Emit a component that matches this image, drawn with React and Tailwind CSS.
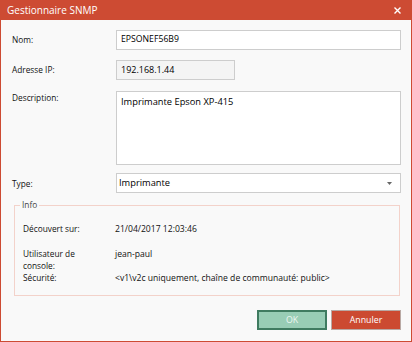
import React from "react";

const font = { fontFamily: '"Open Sans", "Noto Sans", sans-serif' };

const Field = ({ label, children, className = "" }) => (
  <div className={`flex ${className}`}>
    <div className="w-[104px] shrink-0 text-[8.3px] text-[#111]">{label}</div>
    {children}
  </div>
);

const InfoRow = ({ label, value, className = "" }) => (
  <div className={`flex text-[8.3px] text-[#111] leading-[12px] ${className}`}>
    <div className="w-[92px] shrink-0">{label}</div>
    <div className="text-[8.6px]">{value}</div>
  </div>
);

export default function App() {
  return (
    <div
      style={font}
      className="w-[412px] h-[342px] flex flex-col bg-[#cd4b33] overflow-hidden"
    >
      {/* title bar */}
      <div className="h-[20px] shrink-0 flex items-center justify-between pl-[7px] pr-[11px] text-white">
        <span className="text-[10px] leading-none">Gestionnaire SNMP</span>
        <svg width="7" height="7" viewBox="0 0 7 7">
          <path d="M0.5 0.5 L6.5 6.5 M6.5 0.5 L0.5 6.5" stroke="#fff" strokeWidth="1.4" />
        </svg>
      </div>

      {/* body */}
      <div className="flex-1 mx-[1px] mb-[1px] bg-[#f9f9f9] flex flex-col pl-[11px] pr-[10px]">
        <Field label="Nom:" className="mt-[10px] items-center">
          <div className="flex-1 h-[20px] border border-[#cdcdcd] bg-white flex items-center pl-[4px] text-[8.7px] text-black">
            EPSONEF56B9
          </div>
        </Field>

        <Field label="Adresse IP:" className="mt-[10px] items-center">
          <div className="w-[119px] h-[20px] border border-[#cdcdcd] bg-[#f4f4f4] flex items-center pl-[4px] text-[9px] text-black">
            192.168.1.44
          </div>
        </Field>

        <Field label={<span className="block mt-[1px]">Description:</span>} className="mt-[11px]">
          <div className="flex-1 h-[74px] border border-[#cdcdcd] bg-white pl-[4px] pt-[3px] text-[9.3px] text-black">
            Imprimante Epson XP-415
          </div>
        </Field>

        <Field label={<span className="block mt-[3px]">Type:</span>} className="mt-[8px] items-center">
          <div className="flex-1 h-[20px] border border-[#cdcdcd] bg-white flex items-center justify-between pl-[2px] pr-[8px] text-[9.3px] text-black">
            <span>Imprimante</span>
            <svg width="5" height="3" viewBox="0 0 5 3">
              <path d="M0 0 H5 L2.5 3 Z" fill="#666" />
            </svg>
          </div>
        </Field>

        {/* group box */}
        <div className="relative mt-[12px] ml-[2px] w-[386px] h-[91px] border border-[#f3d2ca] pl-[8px]">
          <span className="absolute left-[5px] top-[-7px] px-[2px] bg-[#f9f9f9] text-[8.3px] leading-[12px] text-[#444]">
            Info
          </span>
          <InfoRow label="Découvert sur:" value="21/04/2017 12:03:46" className="mt-[17px]" />
          <div className="flex text-[8.3px] text-[#111] leading-[12px] mt-[13px]">
            <div className="w-[92px] shrink-0">
              Utilisateur de
              <br />
              console:
            </div>
            <div className="text-[8.6px]">jean-paul</div>
          </div>
          <InfoRow
            label="Sécurité:"
            value="<v1\v2c uniquement, chaîne de communauté: public>"
          />
        </div>

        {/* buttons */}
        <div className="flex justify-end gap-[4px] mt-[14px]">
          <button className="w-[70px] h-[20px] bg-[#98cdb5] border-2 border-[#3f7b60] text-[#eef7f2] text-[8.8px] leading-none">
            OK
          </button>
          <button className="w-[70px] h-[20px] bg-[#cc4a31] border border-[#b9a9a4] text-white text-[8.8px] leading-none">
            Annuler
          </button>
        </div>
      </div>
    </div>
  );
}
